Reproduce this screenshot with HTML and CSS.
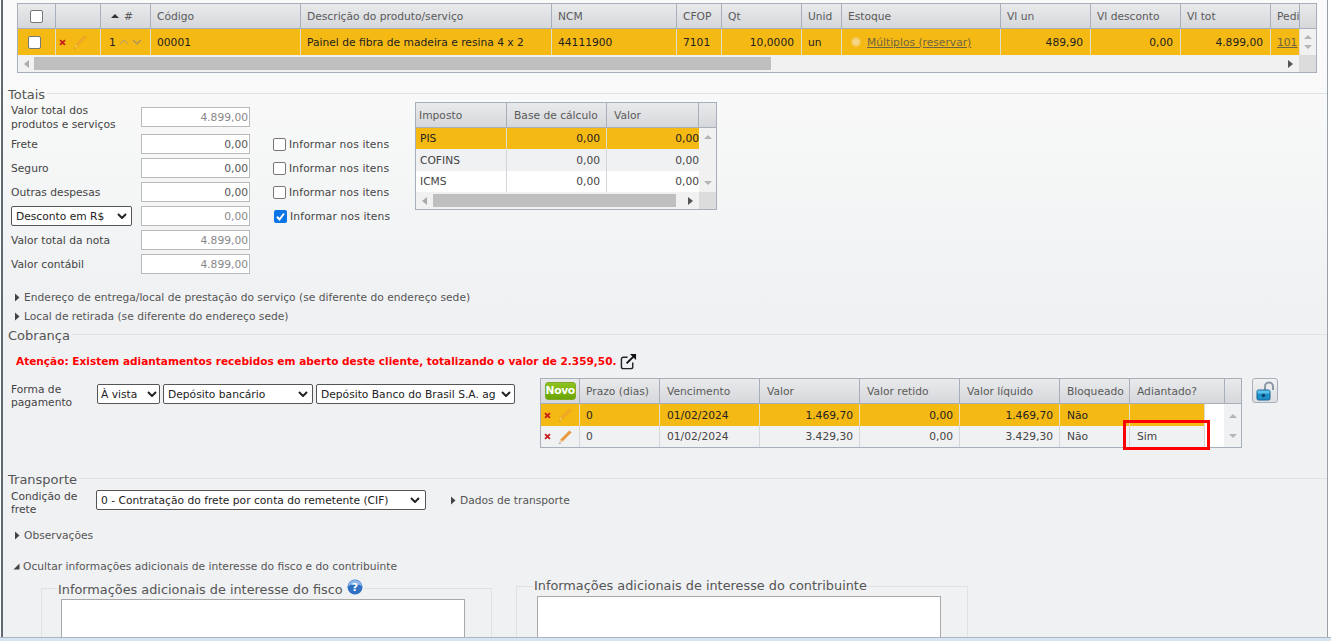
FILE: index.html
```html
<!DOCTYPE html>
<html lang="pt-BR">
<head>
<meta charset="utf-8">
<title>Nota fiscal</title>
<link rel="stylesheet" href="styles.css">
</head>
<body>
<svg class="defs" width="0" height="0">
  <symbol id="del" viewBox="0 0 8 8"><path d="M1.2 1.2 6.8 6.8M6.8 1.2 1.2 6.8" stroke="#c8201c" stroke-width="2.1" fill="none"/></symbol>
  <symbol id="pen" viewBox="0 0 14 14"><path d="M11.5 .8 13.2 2.5 4.4 11.3 1.9 12.2 2.7 9.6Z" fill="#ee9a3c" stroke="#d9822b" stroke-width=".5"/><path d="M2.7 9.6 4.4 11.3 1.9 12.2Z" fill="#f6e3c4"/><path d="M.8 13.4h1.8" stroke="#777" stroke-width=".7"/></symbol>
  <symbol id="tri" viewBox="0 0 6 9"><path d="M1 0.5 5.5 4.5 1 8.5Z" fill="#444"/></symbol>
</svg>
<div class="page">
  <main class="content">
    <section class="grid-box items">
      <div class="cols items-cols head">
        <div class="cell c"><span class="check"></span></div>
        <div class="cell"></div>
        <div class="cell sort"><svg width="8" height="4" viewBox="0 0 8 4"><path d="M4 0 8 4H0Z" fill="#333"/></svg>#</div>
        <div class="cell">Código</div>
        <div class="cell">Descrição do produto/serviço</div>
        <div class="cell">NCM</div>
        <div class="cell">CFOP</div>
        <div class="cell">Qt</div>
        <div class="cell">Unid</div>
        <div class="cell">Estoque</div>
        <div class="cell">Vl un</div>
        <div class="cell">Vl desconto</div>
        <div class="cell">Vl tot</div>
        <div class="cell">Pedi</div>
        <div class="cell end"></div>
      </div>
      <div class="cols items-cols row sel">
        <div class="cell c"><span class="check row-check"></span></div>
        <div class="cell tools"><svg class="i-del"><use href="#del"/></svg><svg class="i-pen faded"><use href="#pen"/></svg></div>
        <div class="cell order"><span>1</span><svg width="10" height="6" viewBox="0 0 10 6"><path d="M1 5 5 1.2 9 5" fill="none" stroke="#c9a55a" stroke-width="1.2"/></svg><svg width="10" height="6" viewBox="0 0 10 6"><path d="M1 1 5 4.8 9 1" fill="none" stroke="#a9935f" stroke-width="1.2"/></svg></div>
        <div class="cell">00001</div>
        <div class="cell">Painel de fibra de madeira e resina 4 x 2</div>
        <div class="cell">44111900</div>
        <div class="cell">7101</div>
        <div class="cell r">10,0000</div>
        <div class="cell">un</div>
        <div class="cell stock"><i class="dot"></i><a class="link">Múltiplos (reservar)</a></div>
        <div class="cell r">489,90</div>
        <div class="cell r">0,00</div>
        <div class="cell r">4.899,00</div>
        <div class="cell"><a class="link">101</a></div>
        <div class="cell scroll-v"><span class="up"></span><span class="down"></span></div>
      </div>
      <div class="hbar">
        <span class="arrow-l"></span>
        <div class="track"><div class="thumb thumb-items"></div></div>
        <span class="arrow-r"></span>
        <span class="corner"></span>
      </div>
    </section>

    <h2 class="legend totais"><span>Totais</span></h2>
    <section class="totals">
      <div class="form">
        <label class="lbl two">Valor total dos<br>produtos e serviços</label><input class="num ro first" value="4.899,00" readonly><span></span>
        <label class="lbl">Frete</label><input class="num" value="0,00"><label class="inf"><span class="check small"></span>Informar nos itens</label>
        <label class="lbl">Seguro</label><input class="num" value="0,00"><label class="inf"><span class="check small"></span>Informar nos itens</label>
        <label class="lbl">Outras despesas</label><input class="num" value="0,00"><label class="inf"><span class="check small"></span>Informar nos itens</label>
        <div class="sel-wrap desconto">Desconto em R$<svg class="chev" viewBox="0 0 10 6"><path d="M1 1 5 5 9 1" fill="none" stroke="#222" stroke-width="2"/></svg></div><input class="num ro" value="0,00" readonly><label class="inf on"><svg class="checked" viewBox="0 0 13 13"><rect width="13" height="13" rx="2" fill="#0a75e6"/><path d="M3 6.8 5.5 9.5 10 3.5" fill="none" stroke="#fff" stroke-width="2"/></svg>Informar nos itens</label>
        <label class="lbl">Valor total da nota</label><input class="num ro" value="4.899,00" readonly><span></span>
        <label class="lbl">Valor contábil</label><input class="num ro" value="4.899,00" readonly><span></span>
      </div>
      <div class="grid-box taxes">
        <div class="cols tax-cols head">
          <div class="cell">Imposto</div><div class="cell">Base de cálculo</div><div class="cell">Valor</div><div class="cell end"></div>
        </div>
        <div class="tax-body">
          <div class="tax-rows">
            <div class="cols tax-row sel"><div class="cell">PIS</div><div class="cell r">0,00</div><div class="cell r">0,00</div></div>
            <div class="cols tax-row alt"><div class="cell">COFINS</div><div class="cell r">0,00</div><div class="cell r">0,00</div></div>
            <div class="cols tax-row wh"><div class="cell">ICMS</div><div class="cell r">0,00</div><div class="cell r">0,00</div></div>
          </div>
          <div class="scroll-v tax-v"><span class="up"></span><span class="down"></span></div>
        </div>
        <div class="hbar tax-bar">
          <span class="arrow-l"></span>
          <div class="track"><div class="thumb thumb-tax"></div></div>
          <span class="arrow-r"></span>
          <span class="corner"></span>
        </div>
      </div>
    </section>

    <div class="toggle t-end"><svg class="tri"><use href="#tri"/></svg>Endereço de entrega/local de prestação do serviço (se diferente do endereço sede)</div>
    <div class="toggle t-ret"><svg class="tri"><use href="#tri"/></svg>Local de retirada (se diferente do endereço sede)</div>

    <h2 class="legend cobranca"><span>Cobrança</span></h2>
    <p class="alert">Atenção: Existem adiantamentos recebidos em aberto deste cliente, totalizando o valor de 2.359,50.<svg class="ext" viewBox="0 0 18 18"><path d="M13.5 10v4.5a2 2 0 0 1-2 2h-8a2 2 0 0 1-2-2v-8a2 2 0 0 1 2-2H8" fill="none" stroke="#222" stroke-width="1.5"/><path d="M7 11 15 3" stroke="#111" stroke-width="2"/><path d="M10.5 1H17V7.5Z" fill="#111"/></svg></p>

    <section class="payment">
      <label class="lbl pay-label">Forma de<br>pagamento</label>
      <div class="pay-selects">
        <div class="sel-wrap s1">À vista<svg class="chev" viewBox="0 0 10 6"><path d="M1 1 5 5 9 1" fill="none" stroke="#222" stroke-width="2"/></svg></div>
        <div class="sel-wrap s2">Depósito bancário<svg class="chev" viewBox="0 0 10 6"><path d="M1 1 5 5 9 1" fill="none" stroke="#222" stroke-width="2"/></svg></div>
        <div class="sel-wrap s3"><span>Depósito Banco do Brasil S.A. ag</span><svg class="chev" viewBox="0 0 10 6"><path d="M1 1 5 5 9 1" fill="none" stroke="#222" stroke-width="2"/></svg></div>
      </div>
      <div class="grid-box pay-grid">
        <div class="cols pay-cols head">
          <div class="cell c"><span class="novo">Novo</span></div>
          <div class="cell">Prazo (dias)</div><div class="cell">Vencimento</div><div class="cell">Valor</div><div class="cell">Valor retido</div><div class="cell">Valor líquido</div><div class="cell">Bloqueado</div><div class="cell">Adiantado?</div><div class="cell end"></div>
        </div>
        <div class="pay-body">
          <div class="pay-rows">
            <div class="cols pay-row sel">
              <div class="cell tools"><svg class="i-del"><use href="#del"/></svg><svg class="i-pen faded"><use href="#pen"/></svg></div>
              <div class="cell">0</div><div class="cell">01/02/2024</div><div class="cell r">1.469,70</div><div class="cell r">0,00</div><div class="cell r">1.469,70</div><div class="cell">Não</div><div class="cell"></div>
            </div>
            <div class="cols pay-row alt">
              <div class="cell tools"><svg class="i-del"><use href="#del"/></svg><svg class="i-pen"><use href="#pen"/></svg></div>
              <div class="cell">0</div><div class="cell">01/02/2024</div><div class="cell r">3.429,30</div><div class="cell r">0,00</div><div class="cell r">3.429,30</div><div class="cell">Não</div><div class="cell">Sim</div>
            </div>
          </div>
          <div class="pay-gap"></div>
          <div class="scroll-v pay-v"><span class="up"></span><span class="down"></span></div>
        </div>
        <div class="highlight"></div>
      </div>
      <button class="lock" type="button" aria-label="Desbloquear"><svg width="22" height="22" viewBox="0 0 22 22"><path d="M11 10V6.5a4 4 0 0 1 8 0V10" fill="none" stroke="#8a97a6" stroke-width="2"/><rect x="3" y="10" width="13" height="10" rx="1.5" fill="#1f8fc9" stroke="#125f93"/><rect x="3.5" y="10.5" width="12" height="3" fill="#5cc0ea"/><circle cx="9.5" cy="15.5" r="1.7" fill="#0b3e66"/></svg></button>
    </section>

    <h2 class="legend transporte"><span>Transporte</span></h2>
    <section class="frete">
      <label class="lbl frete-label">Condição de<br>frete</label>
      <div class="sel-wrap s4">0 - Contratação do frete por conta do remetente (CIF)<svg class="chev" viewBox="0 0 10 6"><path d="M1 1 5 5 9 1" fill="none" stroke="#222" stroke-width="2"/></svg></div>
      <div class="toggle inline"><svg class="tri"><use href="#tri"/></svg>Dados de transporte</div>
    </section>
    <div class="toggle t-obs"><svg class="tri"><use href="#tri"/></svg>Observações</div>
    <div class="toggle t-ocu"><svg class="tri-open" viewBox="0 0 7 7"><path d="M6.5 0.5V6.5H0.5Z" fill="#444"/></svg>Ocultar informações adicionais de interesse do fisco e do contribuinte</div>

    <section class="extras">
      <fieldset class="fs fs1">
        <legend><span class="fs-text">Informações adicionais de interesse do fisco</span><svg class="help" viewBox="0 0 16 16"><circle cx="8" cy="8" r="7.5" fill="#2f6fc4"/><path d="M1 7a7 6 0 0 1 14 0 10 6 0 0 0-14 0Z" fill="#8db7ea"/><text x="8" y="12" text-anchor="middle" class="help-q">?</text></svg></legend>
        <div class="area"></div>
      </fieldset>
      <fieldset class="fs fs2">
        <legend>Informações adicionais de interesse do contribuinte</legend>
        <div class="area"></div>
      </fieldset>
    </section>
  </main>
  <footer class="band"></footer>
</div>
</body>
</html>
```
FILE: styles.css
```css
* { box-sizing: border-box; }
html, body { margin: 0; height: 641px; overflow: hidden; }
body { font: 10.7px/13px "DejaVu Sans", Verdana, sans-serif; color: #333; background: #fff; }
.defs { position: absolute; }
.page { height: 641px; display: flex; flex-direction: column; overflow: hidden; }
.content {
  flex: 1; min-height: 0; overflow: hidden; padding: 3px 0 0 14px;
  width: 1327px; margin-left: 1px;
  border-left: 2px solid #5f6873; border-right: 1px solid #9aa1a8;
  background: linear-gradient(#f9faf9 0, #f8f9f8 90px, #f0f1f3 300px);
}
.band { height: 4px; background: #d7e4f1; border-top: 1px solid #aab6c4; }

.grid-box { border: 1px solid #a7afba; background: #f1f1f1; position: relative; }
.cols { display: grid; }
.cell { padding: 0 6px 0 7px; border-right: 1px solid #d3d6da; display: flex; align-items: center; white-space: nowrap; overflow: hidden; min-width: 0; }
.head { height: 25px; background: linear-gradient(#e9eaec, #d5d7da); border-bottom: 1px solid #a7afba; color: #5a5a5a; }
.head .cell { border-right: 1px solid #a7afba; }
.head .end { border-right: 0; }
.r { justify-content: flex-end; }
.c { justify-content: center; padding: 0; }
.sel { background: #f5b914; color: #222; }
.alt { background: #f0f1f3; color: #444; }
.wh { background: #fff; color: #444; }
.sel .cell { border-right-color: #e0ddd0; }

.items { width: 1300px; }
.items-cols { grid-template-columns: 38px 45px 50px 150px 251px 125px 45px 80px 40px 159px 90px 90px 90px 29px 1fr; }
.items .cell { padding-left: 6px; }
.items .r { padding-right: 7px; }
.items .c { padding: 0; }
.row { height: 26px; }
.row .scroll-v { background: #f1f1f1; border: 0; padding: 0; gap: 6px; }
.check { width: 13px; height: 13px; border: 1px solid #777; border-radius: 2px; background: #fff; display: block; flex: none; }
.row-check { margin-right: 4px; }
.items .sort { gap: 5px; padding-left: 10px; }
.items .tools, .tools { gap: 7px; padding: 0 0 0 3px; }
.i-del { width: 7px; height: 7px; flex: none; }
.i-pen { width: 14px; height: 14px; flex: none; }
.faded { opacity: .5; }
.items .order { gap: 3px; padding: 0 0 0 8px; }
.items .stock { padding-left: 9px; }
.dot { width: 10px; height: 10px; border-radius: 50%; background: radial-gradient(#f9dc9c 0, #f7cf74 45%, #f5b914 100%); margin: 0 6px 0 0; flex: none; }
.link { color: #6f6440; text-decoration: underline; }
.scroll-v { display: flex; flex-direction: column; justify-content: center; align-items: center; gap: 6px; padding: 0; }
.up { width: 0; height: 0; border: 4px solid transparent; border-top: 0; border-bottom: 4px solid #b5b5b5; }
.down { width: 0; height: 0; border: 4px solid transparent; border-bottom: 0; border-top: 4px solid #b5b5b5; }

.hbar { height: 17px; display: flex; align-items: center; background: #f1f1f1; }
.arrow-l { width: 0; height: 0; border: 4px solid transparent; border-left: 0; border-right: 5px solid #aaa; margin: 0 5px 0 6px; flex: none; }
.arrow-r { width: 0; height: 0; border: 4px solid transparent; border-right: 0; border-left: 5px solid #555; margin: 0 6px; flex: none; }
.track { flex: 1; height: 13px; }
.thumb { height: 13px; background: #bfbfbf; }
.thumb-items { width: 737px; }
.thumb-tax { width: 243px; margin-left: 1px; }
.corner { width: 17px; height: 17px; background: #dcdcdc; flex: none; }

.legend { margin: 0 0 0 -9px; font-weight: 400; font-size: 13px; line-height: 14px; color: #555; display: flex; align-items: center; }
.legend span { padding-right: 2px; }
.legend::after { content: ""; flex: 1; height: 1px; background: #dfe1e3; margin-top: -3px; }
.totais { margin-top: 15px; }
.cobranca { margin-top: 6px; }
.transporte { margin-top: 25px; }

.totals { display: flex; align-items: flex-start; height: 190px; margin-left: -6px; }
.form { display: grid; grid-template-columns: 130px 109px 1fr; grid-template-rows: 23px repeat(6, 20px); row-gap: 4px; width: 398px; flex: none; margin-top: 5px; align-items: center; }
.lbl { color: #444; }
.two { align-self: start; margin-top: -3px; line-height: 14px; }
.num { width: 109px; height: 20px; border: 1px solid #b9b9b9; background: #fff; text-align: right; font: 10.7px "DejaVu Sans", sans-serif; color: #555; padding: 0 1px; }
.ro { color: #888; }
.first { align-self: start; }
.inf { display: flex; align-items: center; margin-left: 23px; gap: 3px; color: #444; padding-top: 1px; white-space: nowrap; letter-spacing: .15px; }
.small { width: 13px; height: 13px; border-color: #767676; }
.checked { width: 13px; height: 13px; flex: none; }
.on { margin-left: 24px; }
.sel-wrap { height: 20px; border: 1px solid #555; border-radius: 2px; background: #fff; display: flex; align-items: center; justify-content: space-between; padding: 0 4px; color: #222; white-space: nowrap; overflow: hidden; }
.chev { width: 10px; height: 6px; flex: none; }
.desconto { width: 121px; }

.taxes { width: 302px; height: 108px; margin-left: 6px; flex: none; }
.tax-cols { grid-template-columns: 91px 100px 92px 1fr; }
.taxes .head .cell:first-child { padding-left: 3px; }
.tax-body { display: flex; height: 64px; }
.tax-rows { width: 283px; flex: none; }
.tax-row { grid-template-columns: 91px 100px 92px; height: 21.4px; }
.tax-row .cell { padding: 0 0 0 4px; }
.tax-row .cell:nth-child(2) { padding-right: 6px; }
.tax-row .cell:last-child { border-right: 0; }
.tax-v { flex: 1; gap: 42px; background: #f1f1f1; }
.tax-bar { height: 17px; }

.toggle { display: flex; align-items: center; color: #555; white-space: nowrap; }
.tri { width: 6px; height: 9px; margin-right: 4px; flex: none; }
.tri-open { width: 7px; height: 7px; margin-right: 3px; flex: none; }
.t-end, .t-ret { margin-left: -3px; height: 13px; }
.t-end { margin-top: -1px; }
.t-ret { margin-top: 6px; }
.t-obs { margin: 13px 0 0 -3px; height: 13px; }
.t-ocu { margin: 18px 0 0 -4px; height: 13px; }
.alert { margin: 9px 0 0 -1px; color: #f00; font-weight: 700; font-size: 10.54px; line-height: 18px; height: 18px; display: flex; align-items: center; white-space: nowrap; }
.ext { width: 17px; height: 17px; margin-left: 3px; }

.payment { height: 70px; margin: 8px 0 0 -6px; display: flex; }
.pay-label { width: 86px; padding-top: 5px; }
.pay-selects { display: flex; gap: 3px; margin-top: 6px; height: 20px; }
.s1 { width: 63px; padding: 0 2px 0 3px; }
.s2 { width: 150px; }
.s3 { width: 199px; padding-right: 3px; }
.pay-grid { width: 702px; height: 70px; margin-left: 25px; flex: none; background: #f0f1f3; }
.pay-cols { grid-template-columns: 39px 80px 100px 100px 100px 100px 70px 95px 1fr; }
.pay-cols .cell:nth-child(2), .pay-row .cell:nth-child(2) { padding-left: 6px; }
.pay-grid .head { height: 25px; }
.novo { width: 31px; height: 18px; background: linear-gradient(#8fc31f, #6aa400); color: #fff; font-weight: 700; font-size: 10.7px; line-height: 16px; border-radius: 3px; text-align: center; display: block; border: 1px solid #7ea92a; letter-spacing: -.3px; }
.pay-body { display: flex; height: 43px; }
.pay-rows { width: 664px; flex: none; }
.pay-row { grid-template-columns: 39px 80px 100px 100px 100px 100px 70px 75px; height: 21px; }
.pay-row.sel { height: 22px; }
.pay-gap { width: 19px; background: #fff; flex: none; }
.pay-v { flex: 1; gap: 16px; background: #f0f1f3; }
.highlight { position: absolute; left: 582px; top: 41px; width: 87px; height: 30px; border: 3px solid #f00; }
.lock { width: 26px; height: 25px; margin-left: 10px; border: 1px solid #a7afba; border-radius: 3px; background: linear-gradient(#f0f1f2, #dcdee1); padding: 0; display: flex; align-items: center; justify-content: center; }

.frete { display: flex; align-items: flex-start; height: 26px; margin: 3px 0 0 -6px; }
.frete-label { width: 85px; line-height: 13px; }
.s4 { width: 330px; padding-right: 5px; }
.inline { margin-left: 24px; height: 20px; }

.extras { display: flex; align-items: flex-start; margin: 6px 0 0 24px; gap: 24px; }
.fs { margin: 0; padding: 0 0 0 19px; border: 1px solid #dfe1e3; height: 70px; }
.fs1 { width: 451px; }
.fs2 { width: 452px; padding-left: 20px; }
.fs legend { font-size: 12.85px; line-height: 14px; padding: 0 1px; margin-left: -4px; color: #555; display: flex; align-items: flex-start; }
.fs-text { padding-top: 4px; }
.area { width: 404px; height: 60px; background: #fff; border: 1px solid #a9a9a9; }
.fs1 .area { margin-top: 2px; }
.fs2 .area { margin-top: 3px; }
.help { width: 16px; height: 16px; margin-left: 4px; flex: none; }
.help-q { fill: #fff; font: 700 11px "DejaVu Sans", sans-serif; }
```
